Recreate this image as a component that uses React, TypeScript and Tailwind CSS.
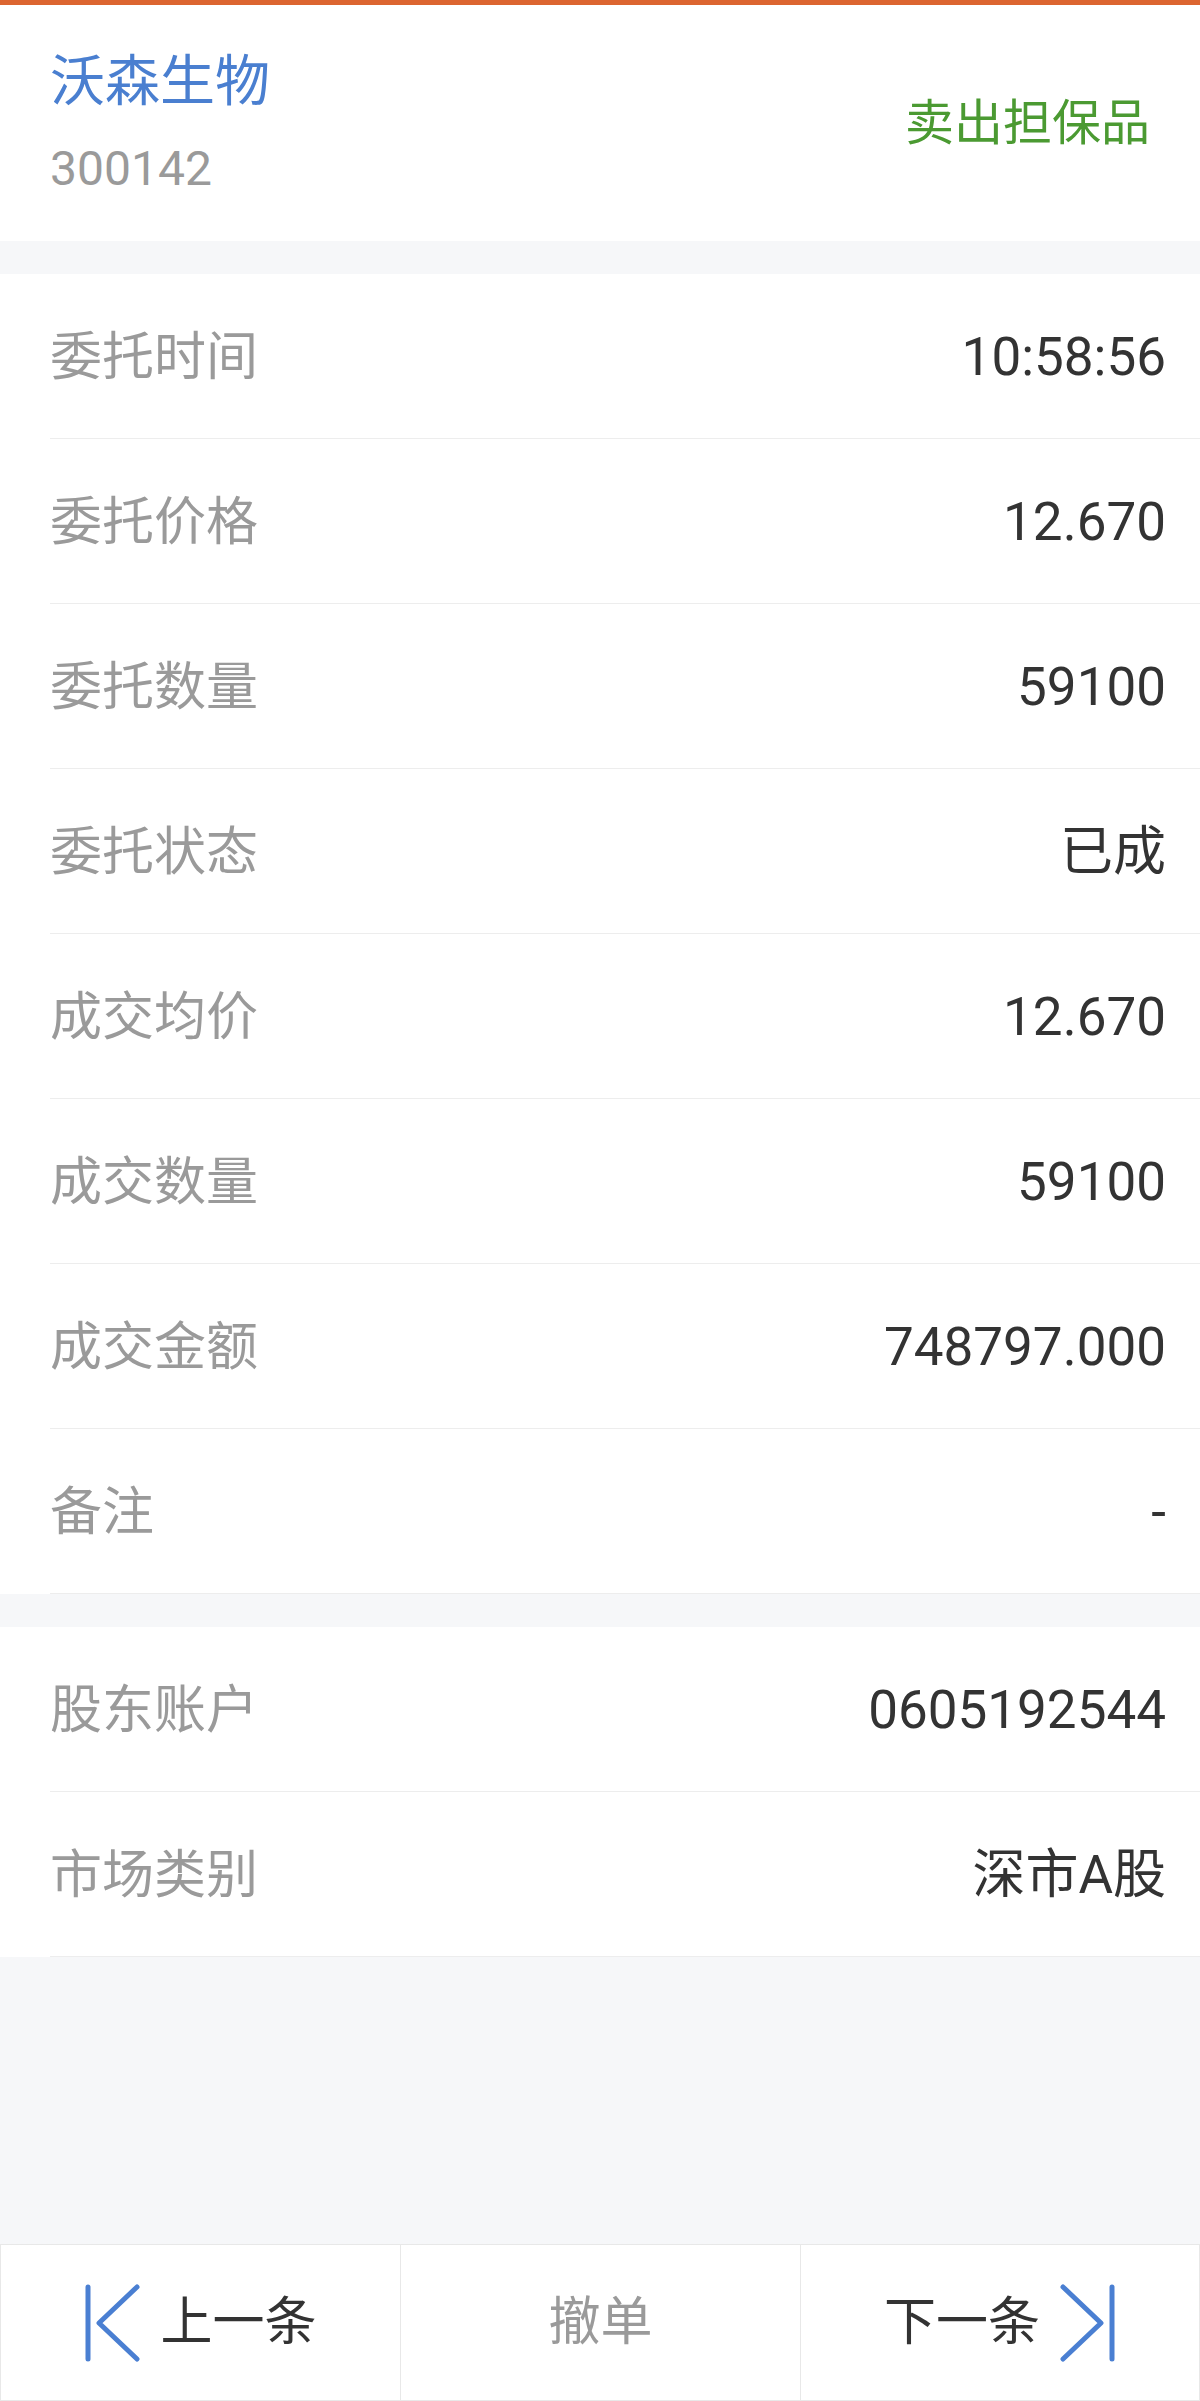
import React from 'react';

const font = { fontFamily: 'Roboto, "Noto Sans CJK SC", sans-serif' };

const orderRows = [
  { label: '委托时间', value: '10:58:56' },
  { label: '委托价格', value: '12.670' },
  { label: '委托数量', value: '59100' },
  { label: '委托状态', value: '已成' },
  { label: '成交均价', value: '12.670' },
  { label: '成交数量', value: '59100' },
  { label: '成交金额', value: '748797.000' },
  { label: '备注', value: '-' },
];

const accountRows = [
  { label: '股东账户', value: '0605192544' },
  { label: '市场类别', value: '深市A股' },
];

const Row: React.FC<{ label: string; value: string }> = ({ label, value }) => (
  <div className="bg-white pl-[50px]">
    <div className="flex h-[165px] items-center justify-between border-b border-[#ededed] pr-[34px] pt-[3px]">
      <span className="text-[52px] leading-none text-[#9a9a9a]">{label}</span>
      <span className="text-[53px] leading-none text-[#333333]">{value}</span>
    </div>
  </div>
);

const PrevIcon = () => (
  <svg width="58" height="80" viewBox="0 0 58 80" fill="none" stroke="#4a7fd2" strokeWidth="5" strokeLinecap="round" strokeLinejoin="round">
    <line x1="4" y1="4" x2="4" y2="76" />
    <polyline points="53,4 15,40 53,76" />
  </svg>
);

const NextIcon = () => (
  <svg width="58" height="80" viewBox="0 0 58 80" fill="none" stroke="#4a7fd2" strokeWidth="5" strokeLinecap="round" strokeLinejoin="round">
    <line x1="54" y1="4" x2="54" y2="76" />
    <polyline points="5,4 43,40 5,76" />
  </svg>
);

export default function App() {
  return (
    <div className="flex h-[2401px] w-[1200px] flex-col bg-[#f6f7f9]" style={font}>
      <div className="h-[5px] bg-[#dc6530]" />

      {/* 标题 */}
      <div className="flex h-[236px] items-center justify-between bg-white pl-[50px] pr-[50px]">
        <div className="flex flex-col">
          <span className="text-[55px] leading-none text-[#4a7fd0]">沃森生物</span>
          <span className="mt-[36px] text-[48px] leading-none text-[#9a9a9a]">300142</span>
        </div>
        <span className="text-[49px] leading-none text-[#4b9a32]">卖出担保品</span>
      </div>

      <div className="mt-[33px]">
        {orderRows.map((r) => (
          <Row key={r.label} label={r.label} value={r.value} />
        ))}
      </div>

      <div className="mt-[33px]">
        {accountRows.map((r) => (
          <Row key={r.label} label={r.label} value={r.value} />
        ))}
      </div>

      <div className="flex-1" />

      {/* 底部操作栏 */}
      <div className="grid h-[157px] grid-cols-3 border-t border-[#e8e8e8] bg-white">
        <div className="flex items-center justify-center gap-[18px] border-l border-b border-[#e8e8e8]">
          <PrevIcon />
          <span className="text-[52px] leading-none text-[#333333]">上一条</span>
        </div>
        <div className="flex items-center justify-center border-l border-b border-[#e8e8e8]">
          <span className="text-[52px] leading-none text-[#9a9a9a]">撤单</span>
        </div>
        <div className="flex items-center justify-center gap-[18px] border-x border-b border-[#e8e8e8]">
          <span className="text-[52px] leading-none text-[#333333]">下一条</span>
          <NextIcon />
        </div>
      </div>
    </div>
  );
}
